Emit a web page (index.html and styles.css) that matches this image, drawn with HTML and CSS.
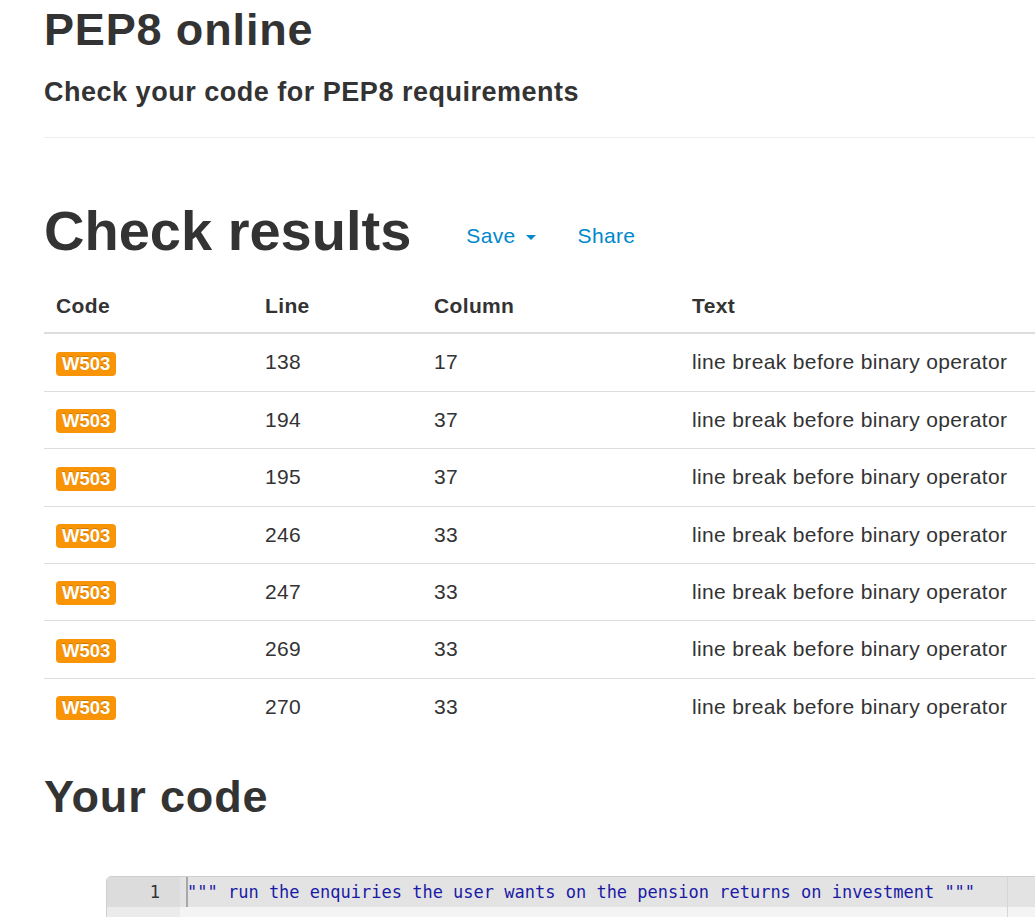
FILE: index.html
```html
<!DOCTYPE html>
<html lang="en">
<head>
<meta charset="utf-8">
<title>PEP8 online</title>
<link rel="stylesheet" href="styles.css">
</head>
<body>
<div class="container">
  <h1 class="title">PEP8 online</h1>
  <h3 class="subtitle">Check your code for PEP8 requirements</h3>
  <hr class="rule">

  <div class="results-head">
    <h1 class="results-title">Check results</h1>
    <ul class="nav">
      <li><a href="#" class="nav-link">Save<span class="caret"></span></a></li>
      <li><a href="#" class="nav-link share">Share</a></li>
    </ul>
  </div>

  <table class="table">
    <colgroup>
      <col class="c-code"><col class="c-line"><col class="c-col"><col class="c-text">
    </colgroup>
    <thead>
      <tr><th>Code</th><th>Line</th><th>Column</th><th>Text</th></tr>
    </thead>
    <tbody>
      <tr><td><span class="label">W503</span></td><td>138</td><td>17</td><td>line break before binary operator</td></tr>
      <tr><td><span class="label">W503</span></td><td>194</td><td>37</td><td>line break before binary operator</td></tr>
      <tr><td><span class="label">W503</span></td><td>195</td><td>37</td><td>line break before binary operator</td></tr>
      <tr><td><span class="label">W503</span></td><td>246</td><td>33</td><td>line break before binary operator</td></tr>
      <tr><td><span class="label">W503</span></td><td>247</td><td>33</td><td>line break before binary operator</td></tr>
      <tr><td><span class="label">W503</span></td><td>269</td><td>33</td><td>line break before binary operator</td></tr>
      <tr><td><span class="label">W503</span></td><td>270</td><td>33</td><td>line break before binary operator</td></tr>
    </tbody>
  </table>

  <h1 class="code-title">Your code</h1>

  <div class="editor">
    <div class="gutter">
      <div class="gutter-cell active">1</div>
      <div class="gutter-cell"></div>
      <div class="gutter-cell"></div>
    </div>
    <div class="content">
      <div class="code-line active"><span class="str">""" run the enquiries the user wants on the pension returns on investment """</span></div>
      <div class="code-line"></div>
      <div class="code-line"></div>
      <div class="cursor"></div>
      <div class="print-margin"></div>
    </div>
  </div>
</div>
</body>
</html>
```

FILE: styles.css
```css
html, body {
  margin: 0;
  padding: 0;
  overflow: hidden;
  background: #fff;
}

body {
  font-family: "Liberation Sans", Arial, sans-serif;
  font-size: 21px;
  color: #333;
  letter-spacing: 0.017em;
}

.container {
  padding-left: 44px;
  width: 1150px;
}

.title {
  margin: 5px 0 0;
  font-size: 45px;
  line-height: 50px;
  font-weight: bold;
  letter-spacing: 0.019em;
}

.subtitle {
  margin: 22px 0 0;
  font-size: 27px;
  line-height: 30px;
  font-weight: bold;
  letter-spacing: 0.019em;
}

.rule {
  margin: 30px 0 0;
  border: 0;
  border-top: 1px solid #eee;
  height: 0;
}

.results-head {
  display: flex;
  align-items: flex-start;
  margin-top: 62px;
}

.results-title {
  margin: 0;
  font-size: 56px;
  line-height: 62px;
  font-weight: bold;
  letter-spacing: 0;
}

.nav {
  list-style: none;
  margin: 21px 0 0 55px;
  padding: 0;
  display: flex;
  gap: 42px;
}

.nav-link {
  display: flex;
  align-items: center;
  color: #0088cc;
  text-decoration: none;
  line-height: 30px;
}

.caret {
  display: inline-block;
  width: 0;
  height: 0;
  margin-left: 10px;
  margin-top: 2px;
  border-top: 5px solid #0088cc;
  border-left: 5px solid transparent;
  border-right: 5px solid transparent;
}

.table {
  margin-top: 14px;
  border-collapse: collapse;
  width: 1106px;
  table-layout: fixed;
}

.c-code { width: 209px; }
.c-line { width: 169px; }
.c-col { width: 258px; }

.table th,
.table td {
  padding: 12px;
  line-height: 32.4px;
  text-align: left;
  vertical-align: top;
  white-space: nowrap;
}

.table th {
  padding-top: 14px;
  padding-bottom: 10px;
  font-weight: bold;
  border-bottom: 2px solid #ddd;
}

.table tbody tr + tr td {
  border-top: 1px solid #ddd;
}

.label {
  display: inline-block;
  vertical-align: middle;
  margin-top: 0;
  padding: 3px 6px;
  font-size: 18.5px;
  line-height: 18px;
  font-weight: bold;
  letter-spacing: 0;
  color: #fff;
  background: #f89406;
  border-radius: 4px;
  text-shadow: 0 -1px 0 rgba(0, 0, 0, 0.2);
}

.code-title {
  margin: 37px 0 0;
  font-size: 45px;
  line-height: 50px;
  font-weight: bold;
  letter-spacing: 0.019em;
}

.editor {
  margin: 54px 0 0 62px;
  width: 1000px;
  display: grid;
  grid-template-columns: 73px 1fr;
  border: 1px solid #cfcfcf;
  border-radius: 5px 0 0 0;
  overflow: hidden;
  font-family: "DejaVu Sans Mono", "Liberation Mono", monospace;
  font-size: 17px;
  letter-spacing: 0;
  background: #f4f4f4;
}

.gutter {
  background: #ebebeb;
}

.gutter-cell {
  height: 30px;
  line-height: 30px;
  text-align: right;
  padding-right: 20px;
  color: #333;
}

.gutter-cell.active {
  background: #dcdcdc;
}

.content {
  position: relative;
}

.code-line {
  height: 30px;
  line-height: 30px;
  padding-left: 7px;
  white-space: pre;
}

.code-line.active {
  background: #e3e3e3;
}

.str {
  color: #1a1aa6;
}

.cursor {
  position: absolute;
  left: 6px;
  top: 0;
  width: 2px;
  height: 30px;
  background: #a8a8a8;
}

.print-margin {
  position: absolute;
  left: 827px;
  top: 0;
  bottom: 0;
  width: 1px;
  background: #d6d6d6;
}
```
